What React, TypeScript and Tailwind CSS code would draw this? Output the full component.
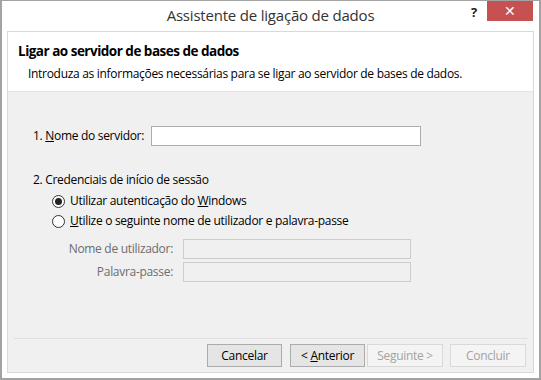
function Radio({ checked }: { checked?: boolean }) {
  return (
    <span className="flex h-[13px] w-[13px] items-center justify-center rounded-full border border-[#333] bg-white">
      {checked ? <span className="h-[7px] w-[7px] rounded-full bg-[#222]" /> : null}
    </span>
  );
}

function Button({ children, disabled }: { children: React.ReactNode; disabled?: boolean }) {
  return (
    <div
      className={
        disabled
          ? 'flex h-[23px] w-[76px] items-center justify-center border border-[#d9d9d9] bg-[#f4f4f4] text-[#a3a3a3]'
          : 'flex h-[23px] w-[75px] items-center justify-center border border-[#acacac] bg-[#e5e5e5] text-black'
      }
    >
      <span>{children}</span>
    </div>
  );
}

export default function App() {
  return (
    <div className="flex h-[380px] w-[541px] flex-col border-x-2 border-t border-b-2 border-[#a3a3a3] bg-white font-['Open_Sans',sans-serif] text-[12px] tracking-[-0.3px] text-black">
      {/* title bar */}
      <div className="grid h-[30px] grid-cols-[1fr_auto_1fr]">
        <div />
        <div className="pt-[4px] text-[15px] leading-[20px] tracking-[-0.2px] text-[#333]">
          Assistente de ligação de dados
        </div>
        <div className="flex justify-end">
          <span className="mr-[10px] pt-[3px] text-[13px] font-bold leading-[16px] text-[#222]">?</span>
          <div className="mr-[6px] flex h-[20px] w-[46px] items-center justify-center bg-[#c75050] text-[14px] leading-none text-white">
            ✕
          </div>
        </div>
      </div>

      {/* panel */}
      <div className="mx-[5px] mb-[5px] flex flex-1 flex-col border border-[#d9d9d9]">
        <div className="h-[60px] border-b border-[#e3e3e3] bg-white pt-[9px]">
          <div className="pl-[10px] text-[13.5px] font-bold leading-[20px] tracking-[-0.5px]">
            Ligar ao servidor de bases de dados
          </div>
          <div className="mt-[5px] pl-[20px] leading-[16px]">
            Introduza as informações necessárias para se ligar ao servidor de bases de dados.
          </div>
        </div>

        <div className="flex flex-1 flex-col bg-[#f0f0f0] px-[6px] pb-[5px]">
          <div className="pl-[19px]">
            <div className="mt-[34px] flex items-center">
              <span className="w-[118px] leading-[16px]">
                1. <span className="underline">N</span>ome do servidor:
              </span>
              <div className="h-[20px] w-[270px] border border-[#abadb3] bg-white" />
            </div>

            <div className="mt-[26px] leading-[16px]">2. Credenciais de início de sessão</div>

            <div className="mt-[3px] pl-[19px]">
              <div className="flex h-[20px] items-center gap-[5px]">
                <Radio checked />
                <span>
                  Utilizar autenticação do <span className="underline">W</span>indows
                </span>
              </div>
              <div className="flex h-[20px] items-center gap-[5px]">
                <Radio />
                <span>
                  <span className="underline">U</span>tilize o seguinte nome de utilizador e palavra-passe
                </span>
              </div>
            </div>

            <div className="mt-[8px] flex flex-col gap-[3px]">
              <div className="flex items-center">
                <span className="w-[150px] pr-[10px] text-right text-[#6d6d6d]">Nome de utilizador:</span>
                <div className="h-[20px] w-[228px] border border-[#cccccc] bg-[#f0f0f0]" />
              </div>
              <div className="flex items-center">
                <span className="w-[150px] pr-[10px] text-right text-[#6d6d6d]">Palavra-passe:</span>
                <div className="h-[20px] w-[228px] border border-[#cccccc] bg-[#f0f0f0]" />
              </div>
            </div>
          </div>

          <div className="flex-1" />
          <div className="h-px bg-[#dfdfdf]" />
          <div className="mt-[5px] flex justify-end pr-[1px]">
            <Button>Cancelar</Button>
            <div className="ml-[8px]">
              <Button>
                {'< '}
                <span className="underline">A</span>nterior
              </Button>
            </div>
            <div className="ml-[2px]">
              <Button disabled>Seguinte &gt;</Button>
            </div>
            <div className="ml-[7px]">
              <Button disabled>Concluir</Button>
            </div>
          </div>
        </div>
      </div>
    </div>
  );
}
